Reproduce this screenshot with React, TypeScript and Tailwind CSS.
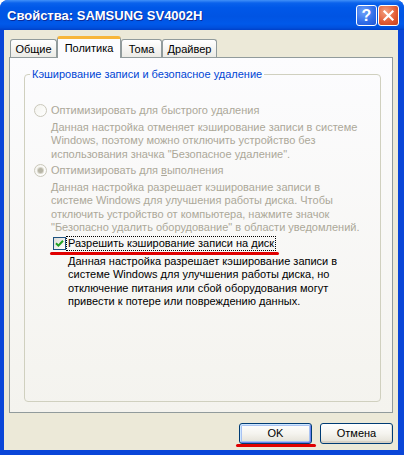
import type { ReactNode } from 'react'

const tabs = [
  { label: 'Общие', w: 'w-[47px]' },
  { label: 'Политика', w: 'w-[64px]', active: true },
  { label: 'Тома', w: 'w-[41px]' },
  { label: 'Драйвер', w: 'w-[55px]' },
]

function Radio({ checked = false }: { checked?: boolean }) {
  return (
    <span className="flex h-[13px] w-[13px] shrink-0 items-center justify-center rounded-full border border-[#CAC8BB] bg-gradient-to-br from-[#F4F3EE] to-white">
      {checked && <span className="h-[5px] w-[5px] rounded-full bg-[#B7B5A6] shadow-[0_0_0_1px_#D8D6CB]" />}
    </span>
  )
}

function Lines({ lines, className }: { lines: string[]; className: string }) {
  return (
    <div className={className}>
      {lines.map((l) => (
        <div key={l} className="whitespace-nowrap">
          {l}
        </div>
      ))}
    </div>
  )
}

function XpButton({ children, primary = false }: { children: ReactNode; primary?: boolean }) {
  return (
    <button
      className={
        'flex h-[21px] w-[73px] items-center justify-center rounded-[3px] border border-[#003C74] bg-gradient-to-b from-white via-[#F5F4EF] to-[#E3E0D5] text-[11px] text-black ' +
        (primary
          ? 'shadow-[inset_1px_1px_0_#CEE7FF,inset_-1px_-1px_0_#6982EE,inset_0_0_0_2px_#A8C2F2]'
          : 'shadow-[inset_0_-2px_0_#D6D0C5,inset_-1px_0_0_#E3E0D5]')
      }
    >
      {children}
    </button>
  )
}

export default function App() {
  return (
    <div className="h-[455px] w-[404px] bg-white font-['Liberation_Sans',Arial,sans-serif] text-[11px] leading-[13.5px] text-black">
      <div className="flex h-full flex-col overflow-hidden rounded-t-[8px] bg-[#0A46D8]">
        {/* title bar */}
        <div className="flex h-[30px] shrink-0 items-center bg-[linear-gradient(to_bottom,#4190F8_0%,#0A62EC_10%,#0058E8_25%,#0054E3_55%,#0059EA_80%,#0050DD_92%,#0040C8_100%)] pl-[7px] pr-[5px] pt-[1px]">
          <span className="flex-1 text-[13px] font-bold text-white [text-shadow:1px_1px_0_#0B2C9A]">
            Свойства: SAMSUNG SV4002H
          </span>
          <div className="flex gap-[1px]">
            <span className="flex h-[21px] w-[21px] items-center justify-center rounded-[3px] border border-white bg-[radial-gradient(circle_at_35%_30%,#6FA2FA,#2F6CE8_60%,#1F55D4)] text-[16px] font-bold leading-none text-white">
              ?
            </span>
            <span className="flex h-[21px] w-[21px] items-center justify-center rounded-[3px] border border-white bg-[radial-gradient(circle_at_35%_30%,#F4A07F,#E15A33_60%,#C5401C)]">
              <svg width="13" height="13" viewBox="0 0 13 13">
                <path d="M2.5 2.5 L10.5 10.5 M10.5 2.5 L2.5 10.5" stroke="white" strokeWidth="2.2" strokeLinecap="square" />
              </svg>
            </span>
          </div>
        </div>

        {/* body */}
        <div className="mb-[5px] ml-[4px] mr-[6px] flex flex-1 flex-col bg-[#ECE9D8] px-[5px] pt-[6px]">
          <div className="flex h-[21px] items-end pl-[1px]">
            {tabs.map((t) =>
              t.active ? (
                <div
                  key={t.label}
                  className={`${t.w} relative z-10 -mb-[1px] flex h-[22px] justify-center rounded-t-[3px] border-x border-t-[3px] border-x-[#919B9C] border-t-[#F7B53A] bg-[#FCFCFE] pt-[3px]`}
                >
                  {t.label}
                </div>
              ) : (
                <div
                  key={t.label}
                  className={`${t.w} flex h-[18px] justify-center rounded-t-[3px] border-x border-t border-[#919B9C] bg-gradient-to-b from-white to-[#ECEBE6] pt-[3px]`}
                >
                  {t.label}
                </div>
              ),
            )}
          </div>

          {/* tab page */}
          <div className="h-[356px] border border-[#919B9C] bg-gradient-to-b from-[#FCFCFE] to-[#F4F3EE] pl-[14px] pr-[11px] pt-[10px]">
            <fieldset className="h-[334px] rounded-[4px] border border-[#D0D0BF]">
              <legend className="ml-[5px] px-[2px] text-[#0046D5]">Кэширование записи и безопасное удаление</legend>
              <div className="pt-[22px]">
                <div className="flex items-center pl-[9px] text-[#ACA899]">
                  <Radio />
                  <span className="ml-[4px]">Оптимизировать для быстрого удаления</span>
                </div>
                <Lines
                  className="ml-[26px] mt-[3.5px] text-[#ACA899]"
                  lines={[
                    'Данная настройка отменяет кэширование записи в системе',
                    'Windows, поэтому можно отключить устройство без',
                    'использования значка "Безопасное удаление".',
                  ]}
                />
                <div className="mt-[2.5px] flex items-center pl-[9px] text-[#ACA899]">
                  <Radio checked />
                  <span className="ml-[4px]">
                    Оптимизировать для <span className="underline">в</span>ыполнения
                  </span>
                </div>
                <Lines
                  className="ml-[26px] mt-[3.5px] text-[#ACA899]"
                  lines={[
                    'Данная настройка разрешает кэширование записи в',
                    'системе Windows для улучшения работы диска. Чтобы',
                    'отключить устройство от компьютера, нажмите значок',
                    '"Безопасно удалить оборудование" в области уведомлений.',
                  ]}
                />
                <div className="relative mt-[1px] flex items-center pl-[28px]">
                  <span className="flex h-[13px] w-[13px] shrink-0 items-center justify-center border border-[#1C5180] bg-gradient-to-br from-[#DCDCD7] to-white">
                    <svg width="9" height="9" viewBox="0 0 9 9">
                      <path d="M1 4.2 L3.4 6.6 L8 1.8" fill="none" stroke="#21A121" strokeWidth="2" />
                    </svg>
                  </span>
                  <span className="border border-dotted border-black pl-[1px] pr-[1px]">Разрешить кэширование записи на диск</span>
                  <span className="absolute left-[25px] top-[16px] h-[3px] w-[229px] rounded-full bg-[#E00000]" />
                </div>
                <Lines
                  className="ml-[43px] mt-[3.5px]"
                  lines={[
                    'Данная настройка разрешает кэширование записи в',
                    'системе Windows для улучшения работы диска, но',
                    'отключение питания или сбой оборудования могут',
                    'привести к потере или повреждению данных.',
                  ]}
                />
              </div>
            </fieldset>
          </div>

          <div className="mt-[10px] flex justify-end gap-[8px]">
            <div className="relative">
              <XpButton primary>OK</XpButton>
              <span className="absolute -left-[3px] top-[21px] h-[3px] w-[80px] rounded-full bg-[#E00000]" />
            </div>
            <XpButton>Отмена</XpButton>
          </div>
        </div>
      </div>
    </div>
  )
}
